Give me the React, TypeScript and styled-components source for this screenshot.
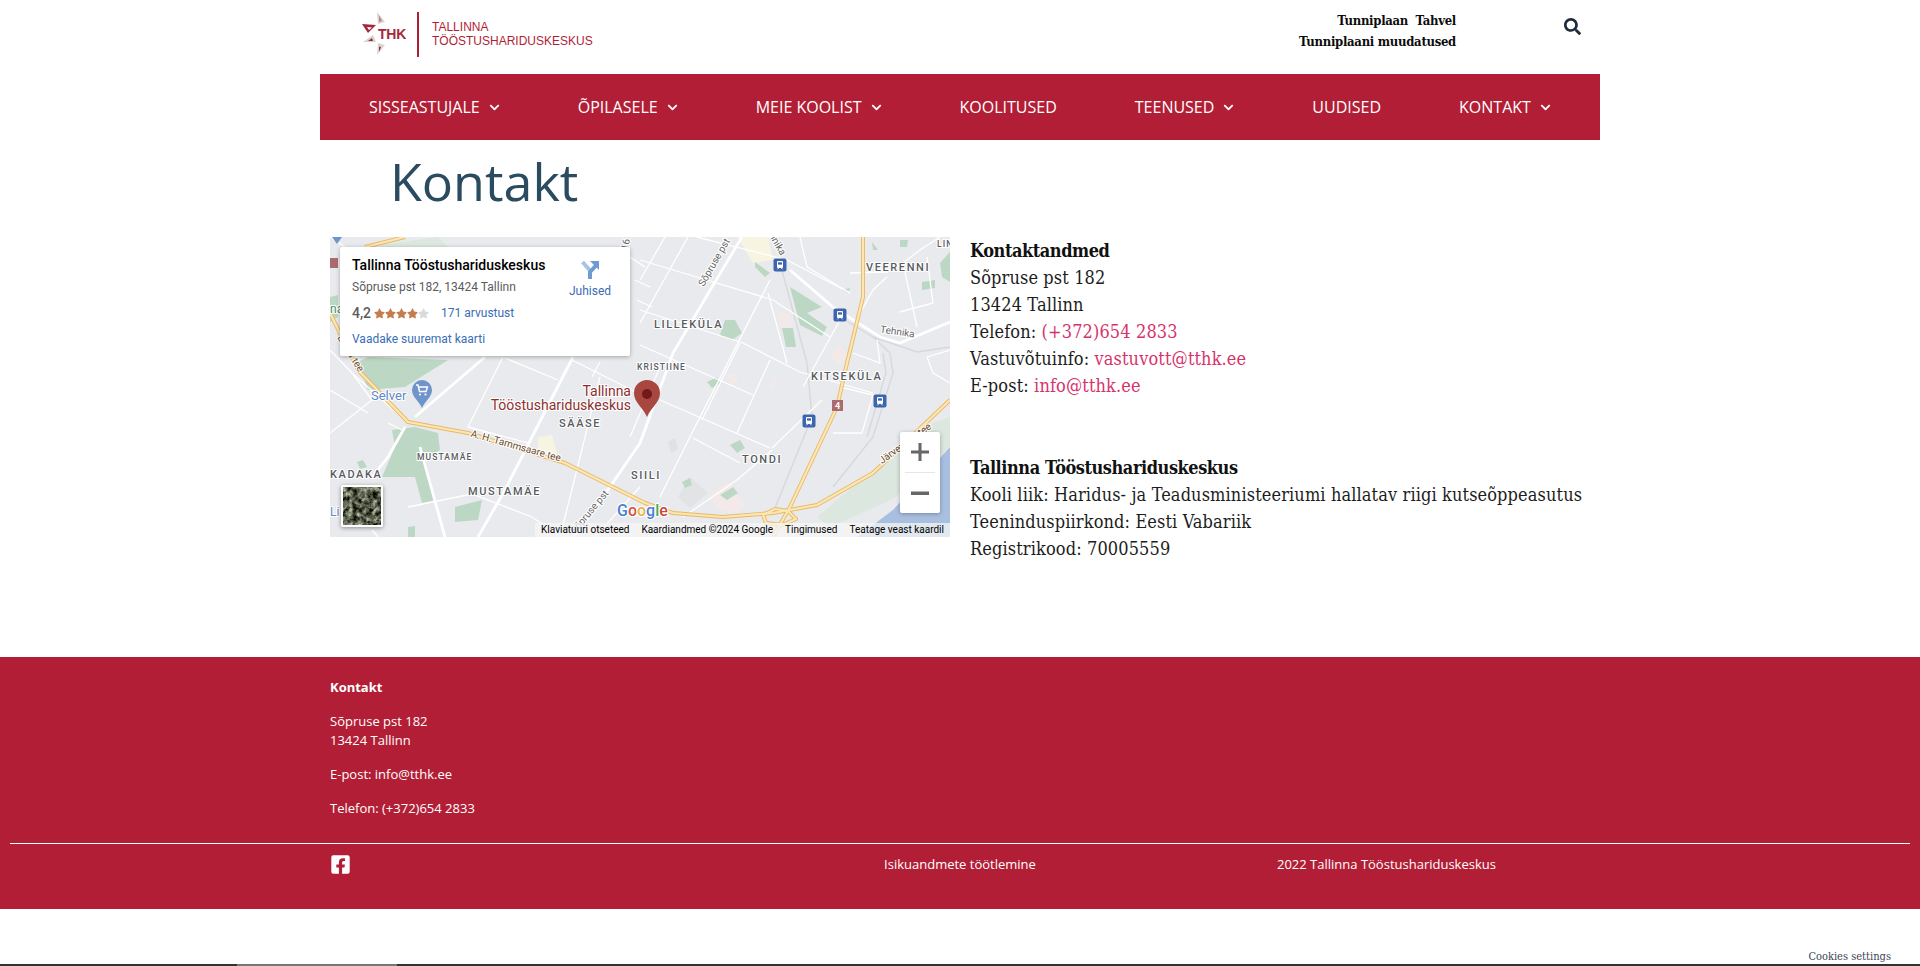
import React from "react";
import styled, { createGlobalStyle } from "styled-components";
import { FaSearch, FaFacebookSquare, FaChevronDown, FaStar } from "react-icons/fa";

const RED = "#b21e35";

const Global = createGlobalStyle`
  html, body { margin: 0; padding: 0; background: #fff; }
  body { font-family: "Open Sans", sans-serif; overflow: hidden; }
  a { text-decoration: none; color: inherit; }
`;

const Page = styled.div`
  position: relative;
  height: 966px;
  overflow: hidden;
`;
const Shell = styled.div`
  width: 1280px;
  margin: 0 auto;
`;
const TopBar = styled.header`
  height: 74px;
  display: flex;
  align-items: flex-start;
  justify-content: space-between;
`;
const LogoBox = styled.a`
  display: block;
  width: 280px;
  height: 74px;
`;
const TopRight = styled.div`
  display: flex;
  align-items: flex-start;
`;
const QuickLinks = styled.div`
  margin-top: 10px;
  margin-right: 108px;
  text-align: right;
  font: 700 13px/21px "DejaVu Serif Condensed", "Liberation Serif", serif;
  letter-spacing: -0.3px;
  color: #0c0c0c;
  white-space: pre;
`;
const SearchButton = styled.button`
  border: 0;
  background: none;
  padding: 0;
  margin: 18px 20px 0 0;
  width: 16px;
  height: 17px;
  color: #202c3c;
  font-size: 17px;
  line-height: 17px;
  display: block;
`;
const Nav = styled.nav`
  background: ${RED};
  height: 66px;
  padding-left: 49px;
  display: flex;
  align-items: center;
  gap: 78px;
`;
const NavItem = styled.a`
  display: flex;
  align-items: center;
  gap: 9px;
  color: #fff;
  font-size: 16px;
  text-transform: uppercase;
  white-space: nowrap;
  svg { width: 11px; height: 11px; }
`;
const Title = styled.h1`
  margin: 0;
  height: 97px;
  padding-left: 70px;
  box-sizing: border-box;
  font: 400 52px/82px "Open Sans", sans-serif;
  color: #2a4b60;
`;
const ContentRow = styled.section`
  display: flex;
  align-items: flex-start;
  gap: 20px;
  padding-left: 10px;
  height: 420px;
`;
const MapFrame = styled.div`
  position: relative;
  width: 620px;
  height: 300px;
  overflow: hidden;
  background: #e9eaed;
  flex: none;
  svg.base { display: block; }
`;
const Card = styled.div`
  position: absolute;
  left: 10px;
  top: 10px;
  width: 290px;
  height: 109px;
  background: #fff;
  box-shadow: 0 1px 4px rgba(0,0,0,.3);
  border-radius: 2px;
  font-family: Roboto, sans-serif;
  box-sizing: border-box;
  padding: 9px 12px;
`;
const CardTitle = styled.div`
  font-size: 14px;
  font-weight: 500;
  line-height: 18px;
  color: #000;
  white-space: nowrap;
`;
const CardAddress = styled.div`
  margin-top: 4px;
  font-size: 12px;
  line-height: 18px;
  color: #5b5b5b;
`;
const RatingRow = styled.div`
  margin-top: 8px;
  display: flex;
  align-items: center;
  height: 18px;
`;
const RatingValue = styled.span`
  font-size: 14px;
  font-weight: 500;
  color: #5b5b5b;
  margin-right: 3px;
`;
const Stars = styled.span`
  display: inline-flex;
  width: 55px;
  margin-right: 12px;
`;
const StarIcon = styled(FaStar)<{ $on: boolean }>`
  width: 11px;
  height: 11px;
  flex: none;
  color: ${(p) => (p.$on ? "#c67d4d" : "#dadada")};
`;
const CardLink = styled.a`
  font-size: 12px;
  line-height: 18px;
  color: #3a6db5;
`;
const LargerLink = styled(CardLink)`
  display: block;
  margin-top: 8px;
`;
const Directions = styled.div`
  position: absolute;
  left: 229px;
  top: 14px;
  width: 42px;
  text-align: center;
  font-size: 12px;
  line-height: 16px;
  color: #3a6db5;
  svg { display: block; margin: 0 auto 4px; }
`;
const ZoomBox = styled.div`
  position: absolute;
  left: 570px;
  top: 195px;
  width: 40px;
  height: 81px;
  background: #fff;
  border-radius: 2px;
  box-shadow: 0 1px 4px rgba(0,0,0,.3);
  display: flex;
  flex-direction: column;
  align-items: center;
`;
const ZoomBtn = styled.div`
  width: 40px;
  height: 40px;
  display: flex;
  align-items: center;
  justify-content: center;
`;
const ZoomDivider = styled.div`
  width: 30px;
  height: 1px;
  background: #e6e6e6;
`;
const Thumb = styled.div`
  position: absolute;
  left: 11px;
  top: 248px;
  width: 38px;
  height: 38px;
  border: 2px solid #fff;
  border-radius: 2px;
  box-shadow: 0 1px 4px rgba(0,0,0,.4);
  overflow: hidden;
  svg { display: block; }
`;
const Attribution = styled.div`
  position: absolute;
  right: 0;
  bottom: 0;
  display: flex;
  height: 14px;
  font: 400 10px/14px Roboto, sans-serif;
  color: #000;
  white-space: nowrap;
`;
const AttrItem = styled.span`
  padding: 0 6px;
  background: rgba(245,245,245,.75);
`;
const Info = styled.div`
  font: 400 18px/27px "DejaVu Serif Condensed", "Liberation Serif", serif;
  letter-spacing: 0.12px;
  color: #1d1d1d;
  white-space: nowrap;
`;
const InfoBlock = styled.p`
  margin: 0 0 55px;
  strong { font-weight: 700; color: #111; letter-spacing: -0.45px; }
`;
const PinkLink = styled.a`
  color: #d6336c;
`;
const Footer = styled.footer`
  background: ${RED};
  height: 252px;
  color: #fff;
  font-size: 13px;
  line-height: 19px;
  padding-top: 21px;
  box-sizing: border-box;
`;
const FooterInner = styled.div`
  width: 1260px;
  margin: 0 auto;
`;
const FooterPara = styled.p`
  margin: 0 0 15px;
`;
const FooterRule = styled.hr`
  border: 0;
  height: 1px;
  background: #fff;
  margin: 25px 10px 0 10px;
`;
const FooterBottom = styled.div`
  width: 1260px;
  margin: 10px auto 0;
  display: grid;
  grid-template-columns: 420px 420px 1fr;
  align-items: center;
  height: 21px;
`;
const FbLink = styled.a`
  display: block;
  height: 21px;
  svg { width: 21px; height: 21px; display: block; }
`;
const Centered = styled.div`
  text-align: center;
`;
const Copyright = styled.div`
  padding-left: 107px;
`;
const Cookies = styled.a`
  position: absolute;
  right: 29px;
  top: 949px;
  font: 400 11px/16px "DejaVu Serif Condensed", "Liberation Serif", serif;
  color: #3a4656;
`;
const BottomEdge = styled.div`
  position: absolute;
  left: 0;
  right: 0;
  bottom: 0;
  height: 2px;
  background: linear-gradient(90deg, #333 0 237px, #777 237px 397px, #333 397px);
`;

const pts = (a: number[][]) => a.map((p) => p.join(",")).join(" ");

const parks: number[][][] = [
  [[38,120],[118,123],[75,150],[38,153],[28,125]],
  [[62,193],[85,190],[108,196],[110,213],[95,223],[105,263],[92,266],[85,240],[68,240],[52,240],[65,210]],
  [[125,270],[152,263],[148,283],[125,285]],
  [[27,225],[33,223],[37,230],[30,232]],
  [[78,290],[85,289],[85,300],[78,300]],
  [[460,50],[492,70],[477,76],[497,90],[492,99],[470,88]],
  [[395,83],[405,83],[412,96],[402,103],[390,98]],
  [[452,91],[463,91],[466,110],[456,110]],
  [[425,25],[440,36],[435,40],[425,30]],
  [[377,145],[387,140],[390,146],[382,151]],
  [[400,208],[410,203],[415,211],[407,216]],
  [[352,245],[360,241],[362,248],[355,251]],
  [[390,258],[403,250],[408,256],[397,263]],
  [[592,45],[605,43],[605,51],[592,53]],
  [[610,26],[620,15],[620,45],[612,40]],
  [[570,3],[578,3],[577,10],[570,10]],
  [[512,53],[520,51],[518,56]],
  [[542,5],[548,13],[543,13]],
  [[0,60],[8,58],[8,80],[0,85]],
];
const palePark = [
  [[487,280],[543,233],[603,186],[620,180],[620,210],[563,262],[500,290]],
  [[50,8],[108,0],[118,10],[50,10]],
];
const pinks: number[][][] = [
  [[447,76],[460,75],[462,90],[450,91]],
  [[500,116],[510,108],[518,120],[508,128]],
  [[398,138],[407,136],[407,146],[400,147]],
  [[440,148],[445,140],[447,141],[442,151]],
  [[377,260],[397,245],[407,256],[415,270],[407,275],[390,273]],
];
const creams: number[][][] = [
  [[407,0],[438,0],[443,23],[423,26]],
  [[208,200],[222,198],[228,220],[208,213]],
];

const thick: number[][][] = [
  [[412,0],[382,50],[343,116],[310,206],[262,276],[243,300]],
  [[243,120],[202,200],[175,253],[148,300]],
  [[460,33],[503,70],[550,100],[570,106],[620,85]],
  [[155,120],[85,180]],
  [[90,210],[115,300]],
  [[75,190],[58,220],[42,240]],
];
const thin: number[][][] = [
  [[335,0],[310,43]],
  [[358,0],[310,86]],
  [[310,23],[350,35],[443,63],[500,100]],
  [[367,0],[457,23],[520,56]],
  [[310,73],[413,106],[470,135],[543,156]],
  [[310,108],[423,158]],
  [[330,163],[440,211]],
  [[363,201],[410,226]],
  [[440,43],[365,190],[330,260]],
  [[410,106],[372,183]],
  [[440,123],[407,196]],
  [[438,56],[457,126]],
  [[442,213],[407,243],[353,280]],
  [[492,163],[442,211]],
  [[470,0],[477,30],[520,56]],
  [[510,83],[473,150]],
  [[523,116],[550,126],[547,103]],
  [[510,150],[543,158],[532,196],[503,196]],
  [[557,40],[543,53],[530,76]],
  [[520,36],[557,35],[573,26],[590,13],[610,0]],
  [[573,26],[587,90]],
  [[570,75],[603,66],[597,20]],
  [[597,120],[620,113]],
  [[597,120],[603,136],[620,146]],
  [[173,120],[138,190],[198,206]],
  [[175,121],[228,143]],
  [[242,123],[288,146],[305,155]],
  [[0,113],[22,136],[75,183]],
  [[0,196],[42,163],[22,136]],
  [[0,153],[38,176]],
  [[58,186],[72,193]],
  [[42,293],[48,300]],
  [[78,270],[142,257],[202,280],[232,300]],
  [[300,20],[315,30]],
  [[305,43],[320,50]],
  [[307,63],[322,70]],
  [[0,0],[30,20]],
  [[270,125],[262,140]],
  [[330,130],[300,200]],
  [[270,140],[230,300]],
  [[310,250],[265,300]],
];
const rails: number[][][] = [
  [[450,26],[477,126],[482,180],[443,276]],
  [[510,80],[543,100],[560,116],[563,136],[543,200],[503,250]],
  [[543,100],[587,115],[620,110]],
  [[553,116],[556,136],[537,200]],
];
const highways: number[][][] = [
  [[0,76],[28,133],[78,185],[138,196],[235,226],[315,266],[343,276],[393,280],[443,276],[487,268],[543,236],[620,163]],
  [[533,0],[533,60],[517,126],[507,170],[460,270],[443,300]],
  [[35,10],[75,0]],
  [[433,278],[445,272],[458,274],[466,282],[452,288],[436,286],[433,278]],
];
const bigLabels: [string, number, number][] = [
  ["LILLEKÜLA", 324, 91],
  ["VEERENNI", 536, 34],
  ["KITSEKÜLA", 481, 143],
  ["SÄÄSE", 229, 190],
  ["TONDI", 412, 226],
  ["SIILI", 301, 242],
  ["MUSTAMÄE", 138, 258],
  ["KADAKA", 0, 241],
];
const smallLabels: [string, number, number][] = [
  ["MUSTAMÄE", 87, 223],
  ["KRISTIINE", 307, 133],
  ["LIN", 607, 10],
];
const rotated: [string, number, number, number, string][] = [
  ["A. H. Tammsaare tee", 185, 212, 15.6, "#6c4a2a"],
  ["Endla tee", 18, 118, 58, "#6c4a2a"],
  ["Sõpruse pst", 387, 27, -60, "#666"],
  ["Sõpruse pst", 262, 277, -50, "#666"],
  ["Tehnika", 567, 98, 8, "#666"],
  ["Tehnika", 442, 4, 60, "#666"],
  ["Järvevana tee", 577, 209, -36, "#6c4a2a"],
  ["16", 299, 8, -80, "#666"],
];
const transit: [number, number][] = [[450,28],[510,78],[550,164],[479,184]];

const halo = { paintOrder: "stroke" as const, stroke: "#fff", strokeWidth: 2.2, strokeLinejoin: "round" as const };

function MapBase() {
  return (
    <svg className="base" width={620} height={300} viewBox="0 0 620 300">
      <rect width={620} height={300} fill="#e9eaed" />
      <polygon points="527,300 563,273 620,210 620,300" fill="#a9bfe0" />
      {palePark.map((p, i) => <polygon key={i} points={pts(p)} fill="#dbe7df" />)}
      <polygon points="348,260 360,240 378,256 360,271" fill="#e2e3e4" />
      <polygon points="338,205 345,201 348,212 341,216" fill="#e0e1e3" />
      {creams.map((p, i) => <polygon key={i} points={pts(p)} fill="#f8f4e2" />)}
      {pinks.map((p, i) => <polygon key={i} points={pts(p)} fill="#f4e9e9" />)}
      {parks.map((p, i) => <polygon key={i} points={pts(p)} fill="#bcd8c4" />)}
      {rails.map((p, i) => <polyline key={i} points={pts(p)} fill="none" stroke="#d6d8db" strokeWidth={1.4} />)}
      {thin.map((p, i) => <polyline key={i} points={pts(p)} fill="none" stroke="#fff" strokeWidth={1.3} />)}
      {thick.map((p, i) => <polyline key={i} points={pts(p)} fill="none" stroke="#fff" strokeWidth={2.8} />)}
      {highways.map((p, i) => <polyline key={i} points={pts(p)} fill="none" stroke="#e8b964" strokeWidth={4} strokeLinejoin="round" />)}
      {highways.map((p, i) => <polyline key={i} points={pts(p)} fill="none" stroke="#fbe6b6" strokeWidth={2.2} strokeLinejoin="round" />)}

      <g fontFamily="Roboto, sans-serif" fontWeight={500} fill="#585b60" style={halo}>
        {bigLabels.map(([t, x, y]) => <text key={t + x} x={x} y={y} fontSize={11} letterSpacing={1.6}>{t}</text>)}
        {smallLabels.map(([t, x, y]) => <text key={t + x} x={x} y={y} fontSize={8.5} letterSpacing={1.1}>{t}</text>)}
      </g>
      <g fontFamily="Roboto, sans-serif" fontSize={10} style={halo} textAnchor="middle">
        {rotated.map(([t, x, y, r, c]) => (
          <text key={t + x} x={x} y={y} fill={c} transform={`rotate(${r} ${x} ${y})`}>{t}</text>
        ))}
      </g>
      <g fontFamily="Roboto, sans-serif" style={halo}>
        <text x={41} y={163} fontSize={13} fill="#5c88c6">Selver</text>
        <text x={0} y={279} fontSize={12} fill="#5c88c6">Li</text>
        <text x={0} y={76} fontSize={12} fill="#3f9161">na</text>
        <text x={301} y={159} fontSize={14} fill="#8c2f2f" textAnchor="end">Tallinna</text>
        <text x={301} y={173} fontSize={14} fill="#8c2f2f" textAnchor="end">Tööstushariduskeskus</text>
        <text x={287} y={279} fontSize={16} fontWeight={500}>
          <tspan fill="#4a7fd6">G</tspan><tspan fill="#d3503f">o</tspan><tspan fill="#e5b53c">o</tspan>
          <tspan fill="#4a7fd6">g</tspan><tspan fill="#4fa45e">l</tspan><tspan fill="#c9473b">e</tspan>
        </text>
      </g>

      <path d="M92 143a10 10 0 0 1 10 10c0 7-7 11-10 18c-3-7-10-11-10-18a10 10 0 0 1 10-10z" fill="#6f93cb" />
      <path d="M86 148h2l1.500 6.500h6.500l1.500-4.500h-9" fill="none" stroke="#fff" strokeWidth={1.4} />
      <circle cx={90} cy={157.500} r={1.1} fill="#fff" />
      <circle cx={95.500} cy={157.500} r={1.1} fill="#fff" />

      <path d="M317 143a13 13 0 0 1 13 13c0 10-9 14-13 24c-4-10-13-14-13-24a13 13 0 0 1 13-13z" fill="#a9463f" />
      <circle cx={317} cy={157} r={5} fill="#721a1a" />

      {transit.map(([x, y]) => (
        <g key={x} transform={`translate(${x - 6.5} ${y - 6.5})`}>
          <rect width={13} height={13} rx={2} fill="#3b66ae" />
          <path d="M3.500 3.500a1 1 0 0 1 1-1h4a1 1 0 0 1 1 1v5a1 1 0 0 1-1 1h-4a1 1 0 0 1-1-1z" fill="#fff" />
          <rect x={4.500} y={3.800} width={4} height={2.300} fill="#3b66ae" />
          <path d="M4 10.800l1-1.200M9 10.800l-1-1.200" stroke="#fff" strokeWidth={1} />
        </g>
      ))}
      <rect x={502} y={163} width={11} height={11} fill="#ab6a6e" />
      <text x={507.500} y={172} fontSize={9} fontWeight={700} fontFamily="Roboto, sans-serif" fill="#fff" textAnchor="middle">4</text>
      <rect x={0} y={21} width={8} height={10} fill="#ab6a6e" />
      <path d="M2 0h10l-5 7z" fill="#6f93cb" />
    </svg>
  );
}

function Satellite() {
  return (
    <svg width={38} height={38} viewBox="0 0 38 38">
      <filter id="sat" x="0" y="0" width="100%" height="100%" colorInterpolationFilters="sRGB">
        <feTurbulence type="fractalNoise" baseFrequency="0.2" numOctaves={3} seed={11} />
        <feColorMatrix values="1.1 0.9 0 0 -0.66  1.1 0.9 0 0 -0.64  1.05 0.85 0 0 -0.66  0 0 0 0 1" />
      </filter>
      <rect width={38} height={38} filter="url(#sat)" />
    </svg>
  );
}

function Logo() {
  return (
    <svg width={280} height={74} viewBox="320 0 280 74">
      <g fill="#d8d4d2">
        <polygon points="377,12 385,22 378,24" />
        <polygon points="363,42 376,42 373,35" />
        <polygon points="377,55 385,45 378,43" />
      </g>
      <polygon points="362,24 376,25 368,33 " fill="#a4283c" />
      <polygon points="367,27 372,27.500 369,30" fill="#fff" />
      <polygon points="368,41 373,41 372,38" fill="#a4283c" />
      <polygon points="379,52 381,47 379,46.500" fill="#a4283c" />
      <polygon points="379,15 382,21 379,22" fill="#a4283c" opacity={0.45} />
      <text x={378} y={39} fontFamily="Liberation Sans, sans-serif" fontWeight={700} fontSize={14} letterSpacing={-0.2} fill="#a4283c">THK</text>
      <rect x={417} y={12} width={2} height={45} fill="#b01e36" />
      <g fontFamily="Liberation Sans, sans-serif" fontSize={12} fill="#b01e36">
        <text x={432} y={31}>TALLINNA</text>
        <text x={432} y={45}>TÖÖSTUSHARIDUSKESKUS</text>
      </g>
    </svg>
  );
}

const navItems: [string, boolean][] = [
  ["Sisseastujale", true],
  ["Õpilasele", true],
  ["Meie koolist", true],
  ["Koolitused", false],
  ["Teenused", true],
  ["Uudised", false],
  ["Kontakt", true],
];

export default function App() {
  return (
    <Page>
      <Global />
      <Shell>
        <TopBar>
          <LogoBox><Logo /></LogoBox>
          <TopRight>
            <QuickLinks>
              <div>{"Tunniplaan  Tahvel"}</div>
              <div>Tunniplaani muudatused</div>
            </QuickLinks>
            <SearchButton aria-label="Otsi"><FaSearch /></SearchButton>
          </TopRight>
        </TopBar>
        <Nav>
          {navItems.map(([label, sub]) => (
            <NavItem key={label}>
              {label}
              {sub && <FaChevronDown />}
            </NavItem>
          ))}
        </Nav>
        <Title>Kontakt</Title>
        <ContentRow>
          <MapFrame>
            <MapBase />
            <Card>
              <CardTitle>Tallinna Tööstushariduskeskus</CardTitle>
              <CardAddress>Sõpruse pst 182, 13424 Tallinn</CardAddress>
              <RatingRow>
                <RatingValue>4,2</RatingValue>
                <Stars>
                  {[0, 1, 2, 3, 4].map((i) => <StarIcon key={i} $on={i < 4} />)}
                </Stars>
                <CardLink>171 arvustust</CardLink>
              </RatingRow>
              <LargerLink>Vaadake suuremat kaarti</LargerLink>
              <Directions>
                <svg width={18} height={18} viewBox="0 0 18 18">
                  <path d="M1.500 1L9 9.500V18" fill="none" stroke="#a9c3e6" strokeWidth={4} />
                  <path d="M9 18v-7l6-6.500" fill="none" stroke="#6f9ad3" strokeWidth={4} />
                  <path d="M9 0h9v9z" fill="#6f9ad3" />
                </svg>
                Juhised
              </Directions>
            </Card>
            <ZoomBox>
              <ZoomBtn>
                <svg width={18} height={18} viewBox="0 0 18 18"><path d="M7.500 0h3v7.500H18v3h-7.500V18h-3v-7.500H0v-3h7.500z" fill="#666" /></svg>
              </ZoomBtn>
              <ZoomDivider />
              <ZoomBtn>
                <svg width={18} height={18} viewBox="0 0 18 18"><rect y={7.500} width={18} height={3.500} fill="#666" /></svg>
              </ZoomBtn>
            </ZoomBox>
            <Thumb><Satellite /></Thumb>
            <Attribution>
              <AttrItem>Klaviatuuri otseteed</AttrItem>
              <AttrItem>Kaardiandmed ©2024 Google</AttrItem>
              <AttrItem>Tingimused</AttrItem>
              <AttrItem>Teatage veast kaardil</AttrItem>
            </Attribution>
          </MapFrame>
          <Info>
            <InfoBlock>
              <strong>Kontaktandmed</strong><br />
              Sõpruse pst 182<br />
              13424 Tallinn<br />
              Telefon: <PinkLink>(+372)654 2833</PinkLink><br />
              Vastuvõtuinfo: <PinkLink>vastuvott@tthk.ee</PinkLink><br />
              E-post: <PinkLink>info@tthk.ee</PinkLink>
            </InfoBlock>
            <InfoBlock>
              <strong>Tallinna Tööstushariduskeskus</strong><br />
              Kooli liik: Haridus- ja Teadusministeeriumi hallatav riigi kutseõppeasutus<br />
              Teeninduspiirkond: Eesti Vabariik<br />
              Registrikood: 70005559
            </InfoBlock>
          </Info>
        </ContentRow>
      </Shell>
      <Footer>
        <FooterInner>
          <FooterPara><strong>Kontakt</strong></FooterPara>
          <FooterPara>Sõpruse pst 182<br />13424 Tallinn</FooterPara>
          <FooterPara>E-post: info@tthk.ee</FooterPara>
          <FooterPara>Telefon: (+372)654 2833</FooterPara>
        </FooterInner>
        <FooterRule />
        <FooterBottom>
          <FbLink><FaFacebookSquare /></FbLink>
          <Centered>Isikuandmete töötlemine</Centered>
          <Copyright>2022 Tallinna Tööstushariduskeskus</Copyright>
        </FooterBottom>
      </Footer>
      <Cookies>Cookies settings</Cookies>
      <BottomEdge />
    </Page>
  );
}
